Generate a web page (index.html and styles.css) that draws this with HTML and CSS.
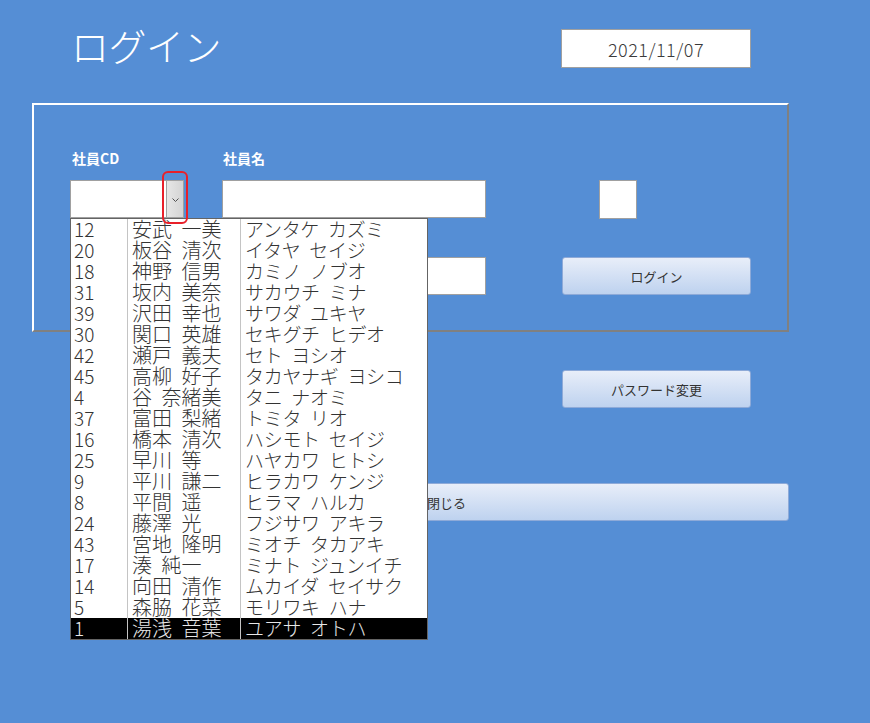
FILE: index.html
```html
<!DOCTYPE html>
<html lang="ja">
<head>
<meta charset="utf-8">
<title>ログイン</title>
<link rel="stylesheet" href="styles.css">
</head>
<body>
<div class="screen">
  <header class="header">
    <h1 class="title">ログイン</h1>
    <div class="date">2021/11/07</div>
  </header>

  <section class="frame">
    <div class="labels">
      <span class="label label-cd">社員CD</span>
      <span class="label">社員名</span>
    </div>

    <div class="row row-first">
      <div class="combo">
        <div class="combo-field"></div>
        <div class="combo-btn">
          <svg width="7" height="4" viewBox="0 0 7 4"><path d="M0.5 0.5 L3.5 3.5 L6.5 0.5" fill="none" stroke="#505050" stroke-width="1"/></svg>
        </div>
        <div class="focus-ring"></div>

        <div class="dropdown">
          <div class="opt"><span>12</span><span>安武 一美</span><span>アンタケ カズミ</span></div>
          <div class="opt"><span>20</span><span>板谷 清次</span><span>イタヤ セイジ</span></div>
          <div class="opt"><span>18</span><span>神野 信男</span><span>カミノ ノブオ</span></div>
          <div class="opt"><span>31</span><span>坂内 美奈</span><span>サカウチ ミナ</span></div>
          <div class="opt"><span>39</span><span>沢田 幸也</span><span>サワダ ユキヤ</span></div>
          <div class="opt"><span>30</span><span>関口 英雄</span><span>セキグチ ヒデオ</span></div>
          <div class="opt"><span>42</span><span>瀬戸 義夫</span><span>セト ヨシオ</span></div>
          <div class="opt"><span>45</span><span>高柳 好子</span><span>タカヤナギ ヨシコ</span></div>
          <div class="opt"><span>4</span><span>谷 奈緒美</span><span>タニ ナオミ</span></div>
          <div class="opt"><span>37</span><span>富田 梨緒</span><span>トミタ リオ</span></div>
          <div class="opt"><span>16</span><span>橋本 清次</span><span>ハシモト セイジ</span></div>
          <div class="opt"><span>25</span><span>早川 等</span><span>ハヤカワ ヒトシ</span></div>
          <div class="opt"><span>9</span><span>平川 謙二</span><span>ヒラカワ ケンジ</span></div>
          <div class="opt"><span>8</span><span>平間 遥</span><span>ヒラマ ハルカ</span></div>
          <div class="opt"><span>24</span><span>藤澤 光</span><span>フジサワ アキラ</span></div>
          <div class="opt"><span>43</span><span>宮地 隆明</span><span>ミオチ タカアキ</span></div>
          <div class="opt"><span>17</span><span>湊 純一</span><span>ミナト ジュンイチ</span></div>
          <div class="opt"><span>14</span><span>向田 清作</span><span>ムカイダ セイサク</span></div>
          <div class="opt"><span>5</span><span>森脇 花菜</span><span>モリワキ ハナ</span></div>
          <div class="opt opt-selected"><span>1</span><span>湯浅 音葉</span><span>ユアサ オトハ</span></div>
        </div>
      </div>
      <div class="field field-name"></div>
      <div class="field field-box"></div>
    </div>

    <div class="row row-second">
      <div class="field field-pass"></div>
      <button class="btn btn-login">ログイン</button>
    </div>
  </section>

  <div class="actions">
    <button class="btn btn-pw">パスワード変更</button>
    <button class="btn btn-close">閉じる</button>
  </div>
</div>
</body>
</html>
```

FILE: styles.css
```css
html, body {
  margin: 0;
  padding: 0;
}

body {
  background: #558ed5;
  font-family: "Noto Sans CJK JP", "Noto Sans", sans-serif;
}

.screen {
  position: relative;
  width: 870px;
  height: 723px;
  overflow: hidden;
}

/* header */
.header {
  display: flex;
  align-items: flex-start;
  height: 103px;
  padding-left: 71px;
  box-sizing: border-box;
}

.title {
  flex: 0 0 490px;
  margin: 25px 0 0 0;
  font-size: 38px;
  line-height: 40px;
  font-weight: 300;
  color: #ffffff;
  letter-spacing: -0.5px;
}

.date {
  margin-top: 29px;
  width: 190px;
  height: 39px;
  box-sizing: border-box;
  border: 1px solid #a0a0a0;
  background: #ffffff;
  display: flex;
  align-items: center;
  justify-content: center;
  font-size: 18px;
  letter-spacing: 0.5px;
  color: #3a3a3a;
  font-weight: 300;
}

/* frame */
.frame {
  margin-left: 32px;
  width: 757px;
  height: 229px;
  box-sizing: border-box;
  border-top: 2px solid #ffffff;
  border-left: 2px solid #ffffff;
  border-right: 2px solid #808080;
  border-bottom: 2px solid #808080;
  padding-top: 45px;
}

.labels {
  display: flex;
  padding-left: 38px;
  height: 16px;
}

.label {
  font-size: 14px;
  line-height: 16px;
  font-weight: 700;
  color: #ffffff;
}

.label-cd {
  flex: 0 0 151px;
}

.row {
  display: flex;
  align-items: flex-start;
}

.row-first {
  margin-top: 14px;
  padding-left: 36px;
}

.row-second {
  margin-top: 38px;
  padding-left: 188px;
}

.field {
  box-sizing: border-box;
  border: 1px solid #a0a0a0;
  background: #ffffff;
  height: 38px;
}

.field-name {
  width: 264px;
  margin-left: 38px;
}

.field-box {
  width: 38px;
  height: 39px;
  margin-left: 113px;
}

.field-pass {
  width: 264px;
}

/* combo */
.combo {
  position: relative;
  display: flex;
  width: 114px;
  height: 38px;
  box-sizing: border-box;
  border: 1px solid #a0a0a0;
  background: #ffffff;
}

.combo-field {
  flex: 1;
}

.combo-btn {
  width: 17px;
  box-sizing: border-box;
  border-left: 1px solid #a0a0a0;
  background: linear-gradient(to right, #e6e6e6, #d4d4d4);
  display: flex;
  align-items: center;
  justify-content: center;
  padding-top: 2px;
}

.combo-btn svg {
  display: block;
}

.focus-ring {
  position: absolute;
  left: 91px;
  top: -10px;
  width: 26px;
  height: 53px;
  box-sizing: border-box;
  border: 2px solid #e8202a;
  border-radius: 6px;
  z-index: 11;
}

.dropdown {
  position: absolute;
  left: -1px;
  top: 37px;
  width: 358px;
  box-sizing: border-box;
  border: 1px solid #646464;
  background: #ffffff;
  z-index: 10;
}

.opt {
  display: grid;
  grid-template-columns: 56px 113px 1fr;
  height: 21px;
  font-size: 20px;
  line-height: 20px;
  color: #333333;
  font-weight: 300;
  white-space: nowrap;
}

.opt span {
  padding-left: 3px;
}

.opt span:first-child {
  font-size: 19px;
}

.opt span + span {
  border-left: 1px solid #c4c4c4;
  padding-left: 4px;
}

.opt span:nth-child(2) {
  word-spacing: 5px;
}

.opt span:nth-child(3) {
  font-size: 19px;
  word-spacing: 5px;
  letter-spacing: -0.3px;
}

.opt-selected {
  background: #000000;
  color: #e8e8e8;
}

/* buttons */
.btn {
  display: flex;
  align-items: center;
  justify-content: center;
  box-sizing: border-box;
  height: 38px;
  padding: 0;
  border: 1px solid #8eaad8;
  border-radius: 3px;
  background: linear-gradient(to bottom, #e8eef9, #bed2ef);
  font-family: "Noto Sans CJK JP", "Noto Sans", sans-serif;
  font-size: 13px;
  color: #333333;
}

.btn-login {
  width: 189px;
  height: 38px;
  margin-left: 76px;
  margin-top: 0;
}

.actions {
  display: flex;
  flex-direction: column;
  align-items: flex-start;
}

.btn-pw {
  width: 189px;
  margin-top: 38px;
  margin-left: 562px;
}

.btn-close {
  width: 685px;
  margin-top: 75px;
  margin-left: 104px;
}
```
